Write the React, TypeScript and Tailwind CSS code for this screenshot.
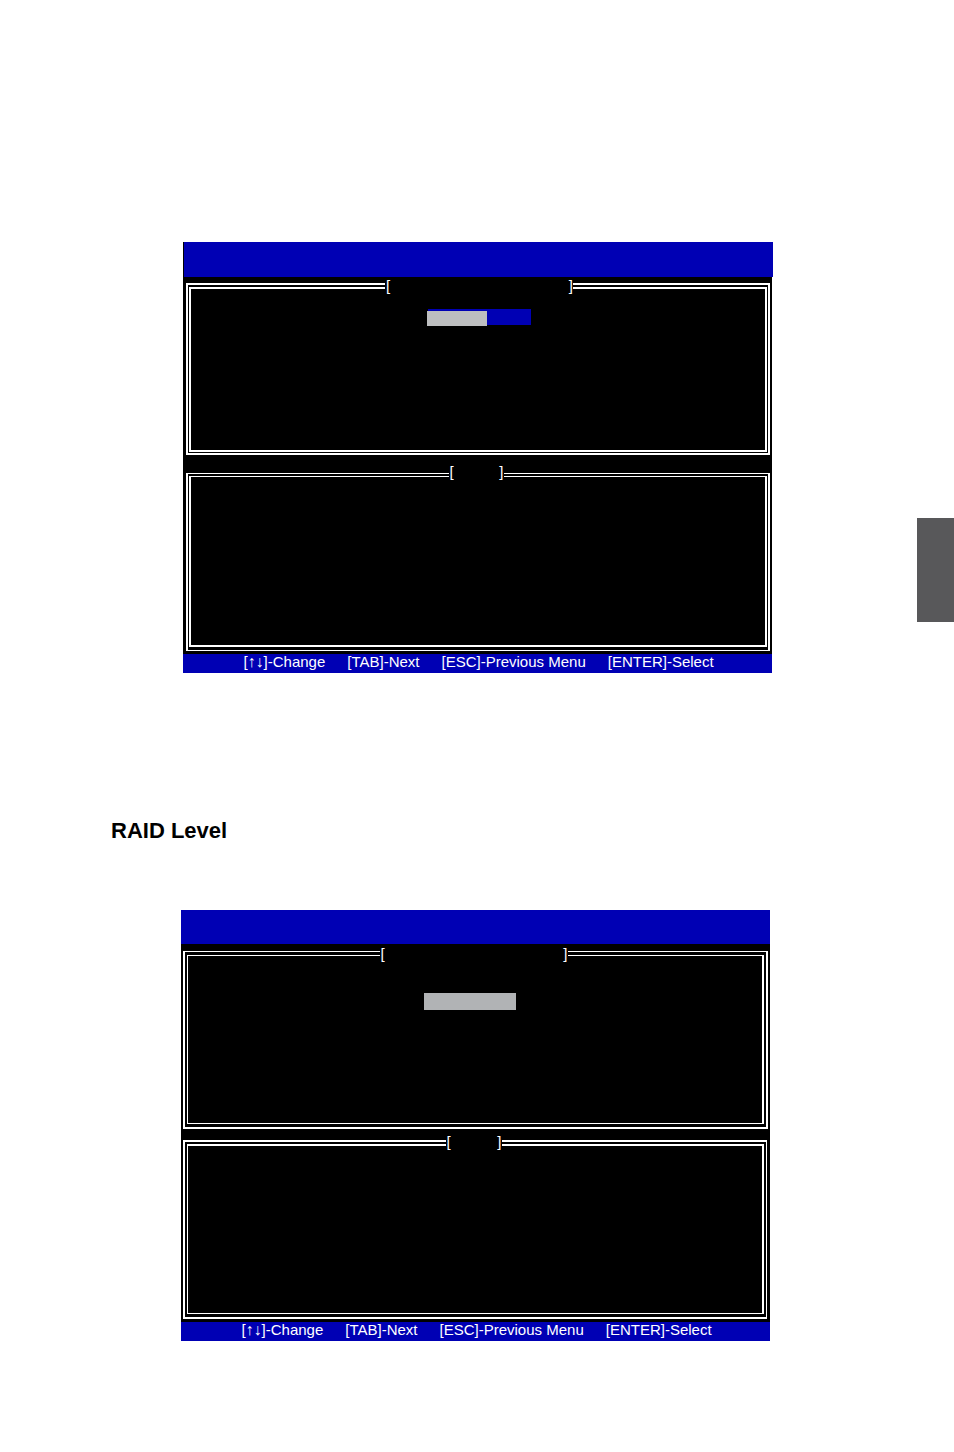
import type { ReactNode } from "react";

type PanelProps = {
  outer: string;
  inner: string;
  slot: string;
  legend: string;
  children?: ReactNode;
};

// Double-line frame with a bracketed title slot over its top edge.
function Panel({ outer, inner, slot, legend, children }: PanelProps) {
  return (
    <section className={`relative flex border-white ${outer}`}>
      <div className={`flex-1 border-white ${inner}`}>{children}</div>
      <div className={`absolute inset-x-0 flex justify-center ${slot}`}>
        <div
          className={`flex h-4 justify-between bg-black pl-px text-[15px] leading-4 text-white ${legend}`}
        >
          <span>[</span>
          <span>]</span>
        </div>
      </div>
    </section>
  );
}

function KeyBar() {
  return (
    <footer className="flex h-[19px] justify-center gap-[22px] bg-[#0000b4] pl-0.5 text-[15px] leading-4 whitespace-nowrap text-white">
      <span>
        [<span className="font-['Liberation_Serif',serif] text-base leading-none">↑↓</span>]-Change
      </span>
      <span>[TAB]-Next</span>
      <span>[ESC]-Previous Menu</span>
      <span>[ENTER]-Select</span>
    </footer>
  );
}

export default function App() {
  return (
    <div className="flex bg-white font-['Liberation_Sans',Arial,sans-serif] text-black">
      <main className="flex-1 pt-[242px] pb-[111px]">
        <div className="mr-[145px] ml-[183px] bg-black">
          <header className="-mr-px ml-px h-[35px] bg-[#0000b4]" />
          <div className="flex flex-col gap-[18px] pt-1.5 pr-0.5 pb-[3px] pl-[3px]">
            <Panel
              outer="h-[172px] border-2 px-px pt-0.5 pb-px"
              inner="border-2 pl-0.5"
              slot="-top-[7px] pl-0.5"
              legend="w-[188px]"
            >
              <div className="mx-auto mt-5 h-4 w-[103px] bg-[#0000b4] pt-0.5">
                <div className="-ml-px h-[15px] w-[60px] bg-[#bdbec0]" />
              </div>
            </Panel>
            <Panel
              outer="h-[178px] border-x-2 border-y px-px pt-0.5 pb-[3px]"
              inner="border-x-2 border-t border-b-2"
              slot="-top-2.5 pr-1"
              legend="w-[55px]"
            />
          </div>
          <KeyBar />
        </div>

        <h1 className="mt-[142px] ml-[111px] text-[22px] leading-8 font-bold">RAID Level</h1>

        <div className="mt-[63px] mr-[147px] ml-[181px] bg-black">
          <header className="h-[34px] bg-[#0000b4]" />
          <div className="flex flex-col gap-[11px] px-0.5 pt-[7px] pb-[3px]">
            <Panel
              outer="h-[178px] border-x-2 border-t border-b-2 px-0.5 py-[3px]"
              inner="border border-r-2 pr-2.5"
              slot="-top-1.5 pr-1"
              legend="w-[188px]"
            >
              <div className="mx-auto mt-[37px] h-[17px] w-[92px] bg-[#b1b3b5]" />
            </Panel>
            <Panel
              outer="mr-px h-[179px] border-y-2 border-r border-l-2 px-0.5 pt-0.5 pb-[3px]"
              inner="border-t-2 border-r-2 border-b border-l"
              slot="-top-2 pr-1"
              legend="w-[56px]"
            />
          </div>
          <KeyBar />
        </div>
      </main>
      <aside className="mt-[518px] h-[104px] w-[37px] bg-[#58585a]" />
    </div>
  );
}
